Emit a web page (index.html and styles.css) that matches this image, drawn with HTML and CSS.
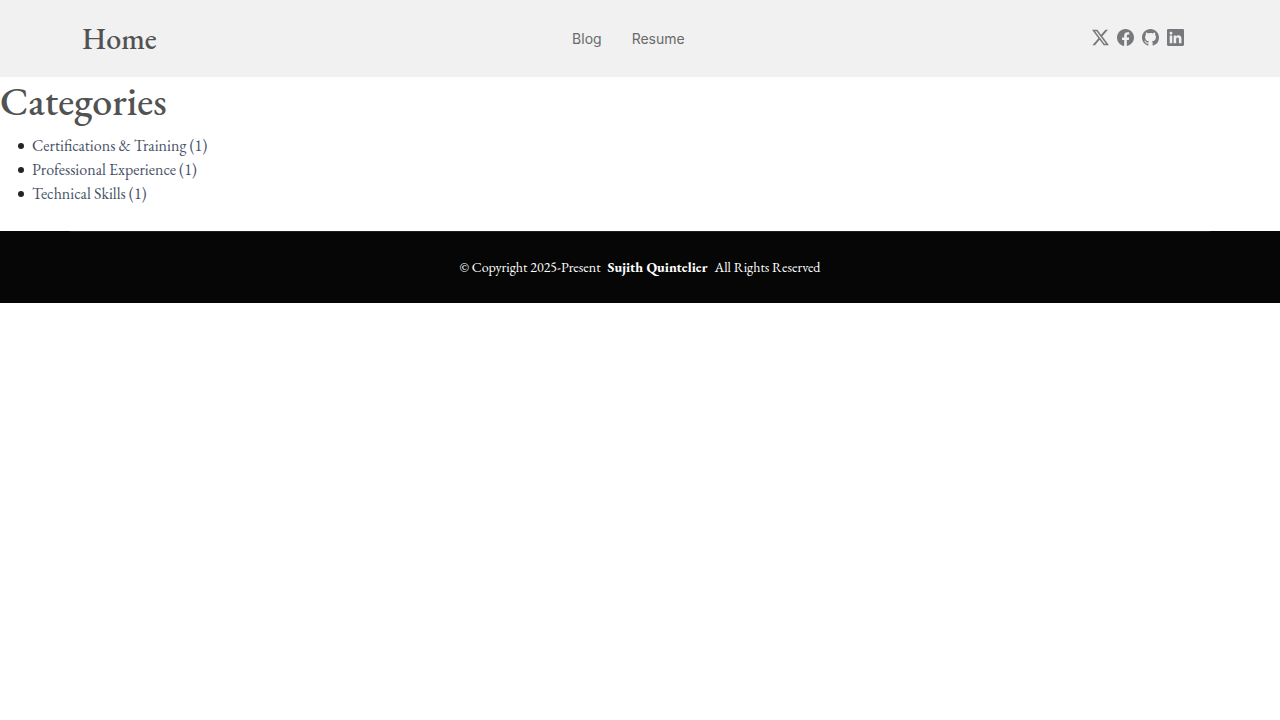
FILE: index.html
```html
<!DOCTYPE html>
<html lang="en">
<head>
<meta charset="utf-8">
<meta name="viewport" content="width=device-width, initial-scale=1">
<title>Categories</title>
<link rel="stylesheet" href="styles.css">
</head>
<body>
<header class="header">
  <div class="container">
    <a class="logo" href="#"><h1 class="sitename">Home</h1></a>
    <nav class="nav" aria-label="Main">
      <a class="nav-link" href="#">Blog</a>
      <a class="nav-link" href="#">Resume</a>
    </nav>
    <div class="social">
      <a class="social-link" href="#" aria-label="X"><svg class="icon" viewBox="0 0 16 16"><path d="M12.6.75h2.454l-5.36 6.142L16 15.25h-4.937l-3.867-5.07-4.425 5.07H.316l5.733-6.57L0 .75h5.063l3.495 4.633L12.601.75Zm-.86 13.028h1.36L4.323 2.145H2.865z"/></svg></a>
      <a class="social-link" href="#" aria-label="Facebook"><svg class="icon" viewBox="0 0 16 16"><path d="M16 8.049c0-4.446-3.582-8.05-8-8.05C3.58 0-.002 3.603-.002 8.05c0 4.017 2.926 7.347 6.75 7.951v-5.625h-2.03V8.05H6.75V6.275c0-2.017 1.195-3.131 3.022-3.131.876 0 1.791.157 1.791.157v1.98h-1.009c-.993 0-1.303.621-1.303 1.258v1.51h2.218l-.354 2.326H9.25V16c3.824-.604 6.75-3.934 6.75-7.951"/></svg></a>
      <a class="social-link" href="#" aria-label="GitHub"><svg class="icon" viewBox="0 0 16 16"><path d="M8 0C3.58 0 0 3.58 0 8c0 3.54 2.29 6.53 5.47 7.59.4.07.55-.17.55-.38 0-.19-.01-.82-.01-1.49-2.01.37-2.53-.49-2.69-.94-.09-.23-.48-.94-.82-1.13-.28-.15-.68-.52-.01-.53.63-.01 1.08.58 1.23.82.72 1.21 1.87.87 2.33.66.07-.52.28-.87.51-1.07-1.78-.2-3.64-.89-3.64-3.95 0-.87.31-1.59.82-2.15-.08-.2-.36-1.02.08-2.12 0 0 .67-.21 2.2.82.64-.18 1.32-.27 2-.27s1.36.09 2 .27c1.53-1.04 2.2-.82 2.2-.82.44 1.1.16 1.92.08 2.12.51.56.82 1.27.82 2.15 0 3.07-1.87 3.75-3.65 3.95.29.25.54.73.54 1.48 0 1.07-.01 1.93-.01 2.2 0 .21.15.46.55.38A8.01 8.01 0 0 0 16 8c0-4.42-3.58-8-8-8"/></svg></a>
      <a class="social-link" href="#" aria-label="LinkedIn"><svg class="icon" viewBox="0 0 16 16"><path d="M0 1.146C0 .513.526 0 1.175 0h13.65C15.474 0 16 .513 16 1.146v13.708c0 .633-.526 1.146-1.175 1.146H1.175C.526 16 0 15.487 0 14.854zm4.943 12.248V6.169H2.542v7.225zm-1.2-8.212c.837 0 1.358-.554 1.358-1.248-.015-.709-.52-1.248-1.342-1.248S2.4 3.226 2.4 3.934c0 .694.521 1.248 1.327 1.248zm4.908 8.212V9.359c0-.216.016-.432.08-.586.173-.431.568-.878 1.232-.878.869 0 1.216.662 1.216 1.634v3.865h2.401V9.25c0-2.22-1.184-3.252-2.764-3.252-1.274 0-1.845.7-2.165 1.193v.025h-.016l.016-.025V6.169h-2.4c.03.678 0 7.225 0 7.225z"/></svg></a>
    </div>
  </div>
</header>
<main class="main">
  <h1 class="title">Categories</h1>
  <ul class="list">
    <li class="item"><a class="category" href="#">Certifications &amp; Training (1)</a></li>
    <li class="item"><a class="category" href="#">Professional Experience (1)</a></li>
    <li class="item"><a class="category" href="#">Technical Skills (1)</a></li>
  </ul>
</main>
<footer class="footer">
  <div class="footer-inner">
    <p class="copyright"><span>© Copyright 2025-Present</span><strong class="owner">Sujith Quintelier</strong><span>All Rights Reserved</span></p>
  </div>
</footer>
</body>
</html>
```

FILE: styles.css
```css
* { box-sizing: border-box; }
body {
  margin: 0;
  background: #fff;
  color: #212529;
  font: 16px/24px "EB Garamond", "Liberation Serif", serif;
}
a { text-decoration: none; }
h1 { margin: 0; font-weight: 500; }
.header { background: #f1f1f1; padding: 20px 0; }
.container {
  display: flex;
  align-items: center;
  justify-content: space-between;
  max-width: 1140px;
  margin: 0 auto;
  padding: 0 12px;
}
.sitename { font-size: 30px; line-height: 37px; color: #525252; }
.nav { display: flex; gap: 30px; padding-left: 8px; font: 14px/20px Inter, sans-serif; }
.nav-link { color: #6a6a6a; }
.social { display: flex; gap: 8px; padding: 0 14px 2px 0; }
.social-link { display: flex; color: #77797c; }
.icon { width: 17px; height: 17px; fill: currentColor; }
.title { font-size: 40px; line-height: 48px; color: #525252; }
.list { margin: 9px 0 25px; padding: 0 0 0 18px; list-style: none; }
.item { display: flex; align-items: center; gap: 8px; }
.item::before { content: ""; width: 6px; height: 6px; border-radius: 50%; background: #212529; }
.category { color: #475268; }
.footer { background: #060606; color: #fff; text-align: center; }
.footer-inner { max-width: 1140px; margin: 0 auto; padding: 24px 0; border-top: 1px solid #1f1f1f; }
.copyright { margin: 0; font-size: 14px; line-height: 23px; }
.owner { padding: 0 7px; }
```
